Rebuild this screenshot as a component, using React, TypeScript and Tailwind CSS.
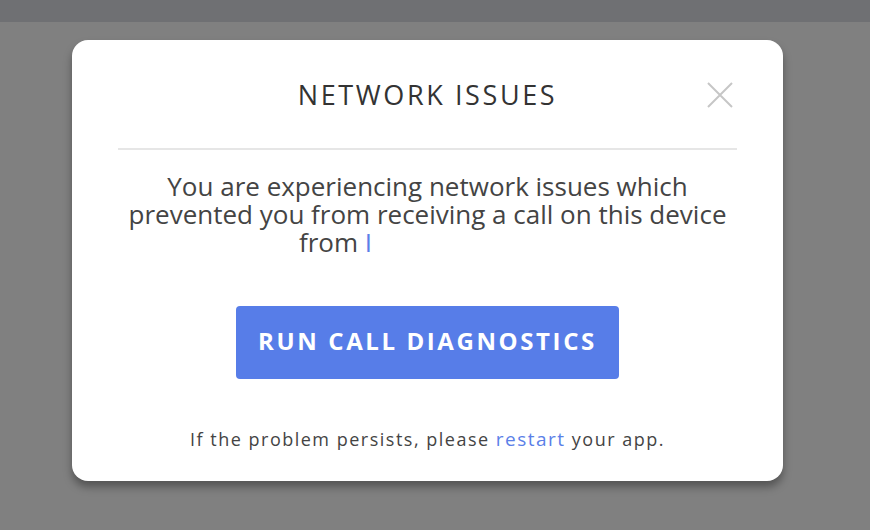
export default function App() {
  return (
    <div className="flex h-[530px] w-[870px] flex-col overflow-hidden bg-[#808080] font-['Open_Sans',sans-serif]">
      <div className="h-[22px] shrink-0 bg-[#6f7073]" />
      <div className="pl-[72px] pt-[18px]">
        <div className="flex h-[441px] w-[711px] flex-col items-center rounded-[16px] bg-white px-[46px] shadow-[0_6px_8px_rgba(0,0,0,0.35)]">
          <div className="relative flex h-[110px] w-full items-center justify-center border-b-2 border-[#e6e6e6] pt-[2px]">
            <h1 className="text-[27px] tracking-[2.6px] text-[#333]">NETWORK ISSUES</h1>
            <button className="absolute right-[4px] top-[42px]">
              <svg width="26" height="26" viewBox="0 0 26 26" fill="none" stroke="#c6c6c6" strokeWidth="2">
                <path d="M1 1L25 25M25 1L1 25" />
              </svg>
            </button>
          </div>
          <p className="mt-[22px] w-full whitespace-nowrap text-center text-[26px] leading-[28px] text-[#444]">
            You are experiencing network issues which
            <br />
            prevented you from receiving a call on this device
            <br />
            from <span className="text-[#5b7fe8]">I</span>
            <span className="inline-block w-[184px]" />
          </p>
          <button className="mt-[50px] h-[73px] w-[383px] rounded-[4px] bg-[#577de8] pb-[3px] text-[24px] font-bold tracking-[2.6px] text-white">
            RUN CALL DIAGNOSTICS
          </button>
          <p className="mt-[46px] text-[18px] tracking-[1.5px] text-[#444]">
            If the problem persists, please <span className="text-[19px] text-[#5b7fe8]">restart</span> your app.
          </p>
        </div>
      </div>
    </div>
  );
}
